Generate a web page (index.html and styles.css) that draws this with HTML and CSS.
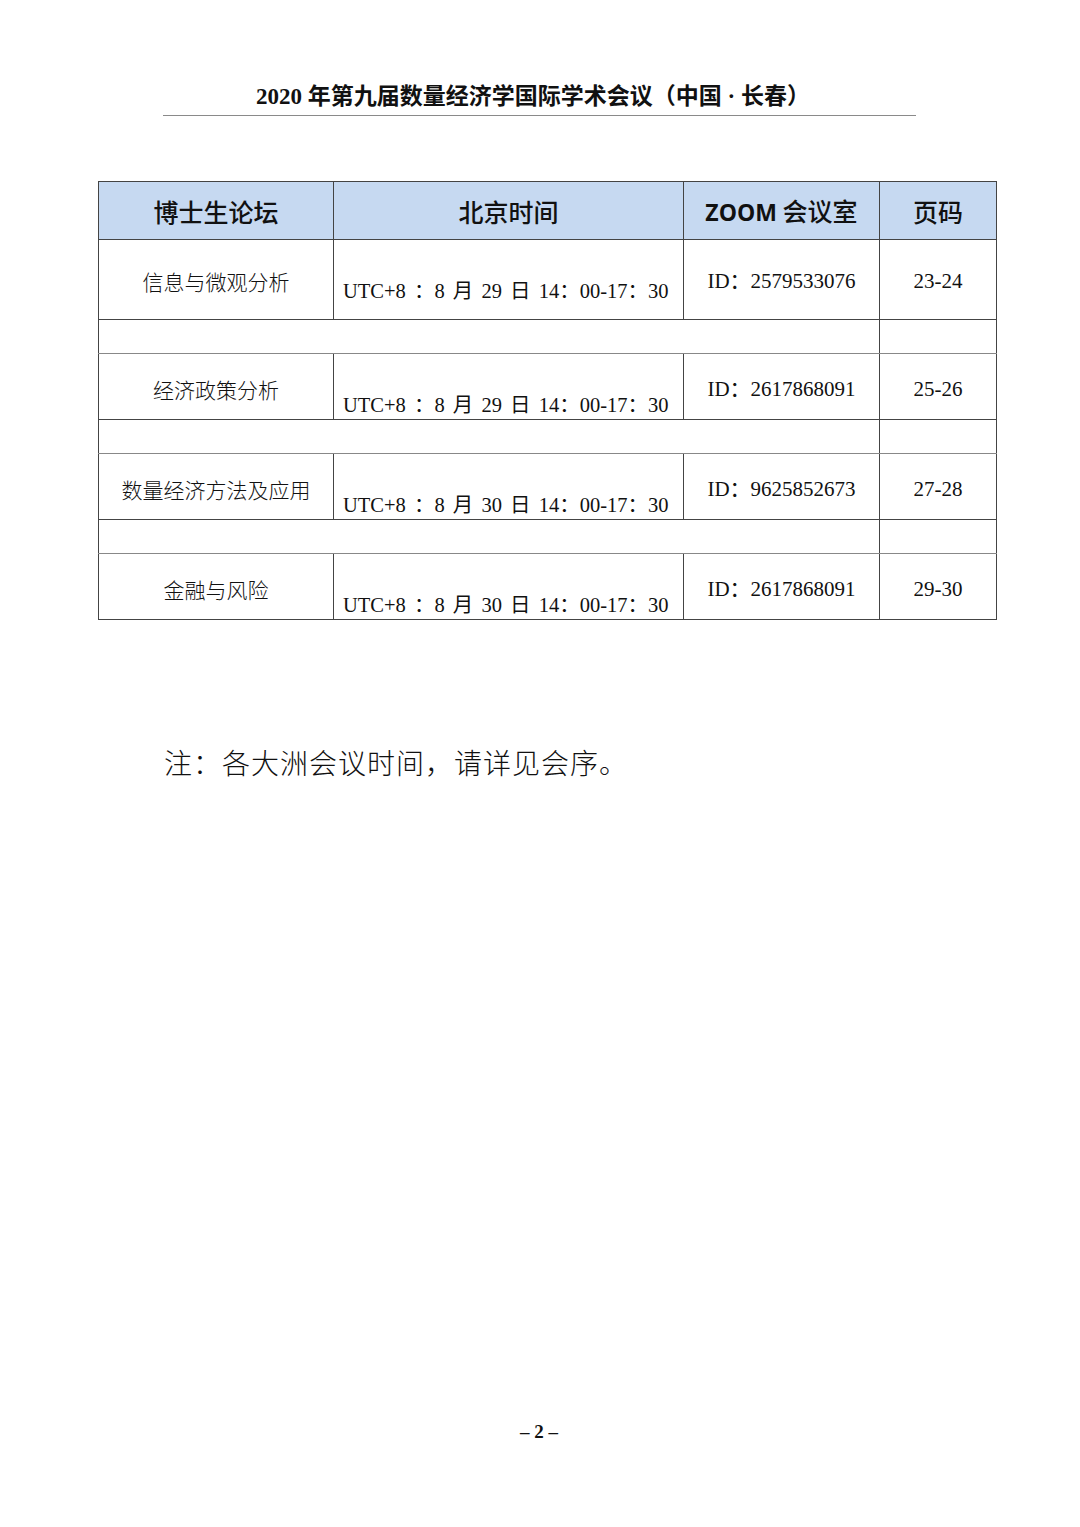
FILE: index.html
```html
<!DOCTYPE html>
<html lang="zh">
<head>
<meta charset="utf-8">
<link rel="stylesheet" href="styles.css">
</head>
<body>
<div class="page">
  <header class="doc-head">
    <div class="doc-title">2020 年第九届数量经济学国际学术会议（中国 · 长春）</div>
    <div class="doc-rule"></div>
  </header>
  <table class="sched">
    <colgroup>
      <col class="c1"><col class="c2"><col class="c3"><col class="c4">
    </colgroup>
    <thead>
      <tr class="hrow">
        <th>博士生论坛</th><th>北京时间</th><th><span class="latin">ZOOM</span> 会议室</th><th>页码</th>
      </tr>
    </thead>
    <tbody>
      <tr class="row r1">
        <td class="name">信息与微观分析</td>
        <td class="time">UTC+8 ：8 月 29 日 14：00-17：30</td>
        <td class="room">ID：2579533076</td>
        <td class="pg">23-24</td>
      </tr>
      <tr class="gap"><td colspan="3"></td><td></td></tr>
      <tr class="row r2">
        <td class="name">经济政策分析</td>
        <td class="time">UTC+8 ：8 月 29 日 14：00-17：30</td>
        <td class="room">ID：2617868091</td>
        <td class="pg">25-26</td>
      </tr>
      <tr class="gap"><td colspan="3"></td><td></td></tr>
      <tr class="row r2">
        <td class="name">数量经济方法及应用</td>
        <td class="time">UTC+8 ：8 月 30 日 14：00-17：30</td>
        <td class="room">ID：9625852673</td>
        <td class="pg">27-28</td>
      </tr>
      <tr class="gap"><td colspan="3"></td><td></td></tr>
      <tr class="row r2">
        <td class="name">金融与风险</td>
        <td class="time">UTC+8 ：8 月 30 日 14：00-17：30</td>
        <td class="room">ID：2617868091</td>
        <td class="pg">29-30</td>
      </tr>
    </tbody>
  </table>
  <p class="note">注：各大洲会议时间，请详见会序。</p>
  <div class="spacer"></div>
  <footer class="pnum">– 2 –</footer>
</div>
</body>
</html>
```
FILE: styles.css
```css
html, body {
  margin: 0;
  padding: 0;
  background: #fff;
}
.page {
  width: 1080px;
  height: 1527px;
  display: flex;
  flex-direction: column;
  font-family: "Liberation Serif", "Noto Sans CJK SC", serif;
  color: #111;
}
.doc-head {
  padding-top: 82px;
  display: flex;
  flex-direction: column;
  align-items: center;
}
.doc-title {
  font-size: 23px;
  font-weight: bold;
  line-height: 30px;
  padding-right: 14px;
}
.doc-rule {
  margin-top: 3px;
  width: 753px;
  height: 1px;
  background: #8a8a8a;
  margin-left: -2px;
}
.sched {
  margin-top: 65px;
  margin-left: 98px;
  width: 898px;
  border-collapse: collapse;
  table-layout: fixed;
  border: 1px solid #7f7f7f;
}
.c1 { width: 235px; }
.c2 { width: 350px; }
.c3 { width: 196px; }
.c4 { width: 117px; }
.sched th, .sched td {
  border: 1px solid #444;
  padding: 0;
}
.hrow { height: 58px; }
.r1 { height: 80px; }
.r2 { height: 66px; }
.gap { height: 34px; }
.hrow th {
  background: #c6d9f1;
  font-family: "Noto Sans CJK SC", sans-serif;
  font-size: 25px;
  font-weight: 500;
  text-align: center;
  vertical-align: middle;
  color: #111;
  line-height: 30px;
}
.hrow th .latin {
  font-family: "Open Sans", "Noto Sans CJK SC", sans-serif;
  font-weight: 700;
  font-size: 23px;
}
.sched td {
  font-size: 21px;
  text-align: center;
  line-height: 22px;
}
.gap td { border-top-color: #888; border-bottom-color: #888; }
.name {
  font-family: "Noto Sans CJK SC", sans-serif;
  font-weight: 300;
  vertical-align: middle;
  padding-top: 3px !important;
}
.r2 .name { padding-top: 5px !important; }
.time {
  vertical-align: bottom;
  text-align: left !important;
  padding-left: 9px !important;
  padding-bottom: 17px !important;
  white-space: nowrap;
  font-size: 20.5px !important;
  word-spacing: 3px;
  font-family: "Liberation Serif", "Noto Sans CJK SC", serif;
}
.r2 .time { padding-bottom: 3px !important; }
.room {
  vertical-align: middle;
  padding-top: 3px !important;
  font-family: "Liberation Serif", "Noto Sans CJK SC", serif;
}
.r2 .room { padding-top: 5px !important; }
.pg {
  vertical-align: middle;
  padding-top: 3px !important;
  font-family: "Liberation Serif", serif;
}
.r2 .pg { padding-top: 5px !important; }
.note {
  margin: 124px 0 0 164px;
  font-family: "Noto Sans CJK SC", sans-serif;
  font-weight: 300;
  font-size: 28px;
  line-height: 36px;
  letter-spacing: 1px;
  color: #111;
}
.spacer { flex: 1; }
.pnum {
  text-align: center;
  font-weight: bold;
  font-size: 19px;
  line-height: 22px;
  padding-bottom: 84px;
  margin-left: -2px;
}
```
